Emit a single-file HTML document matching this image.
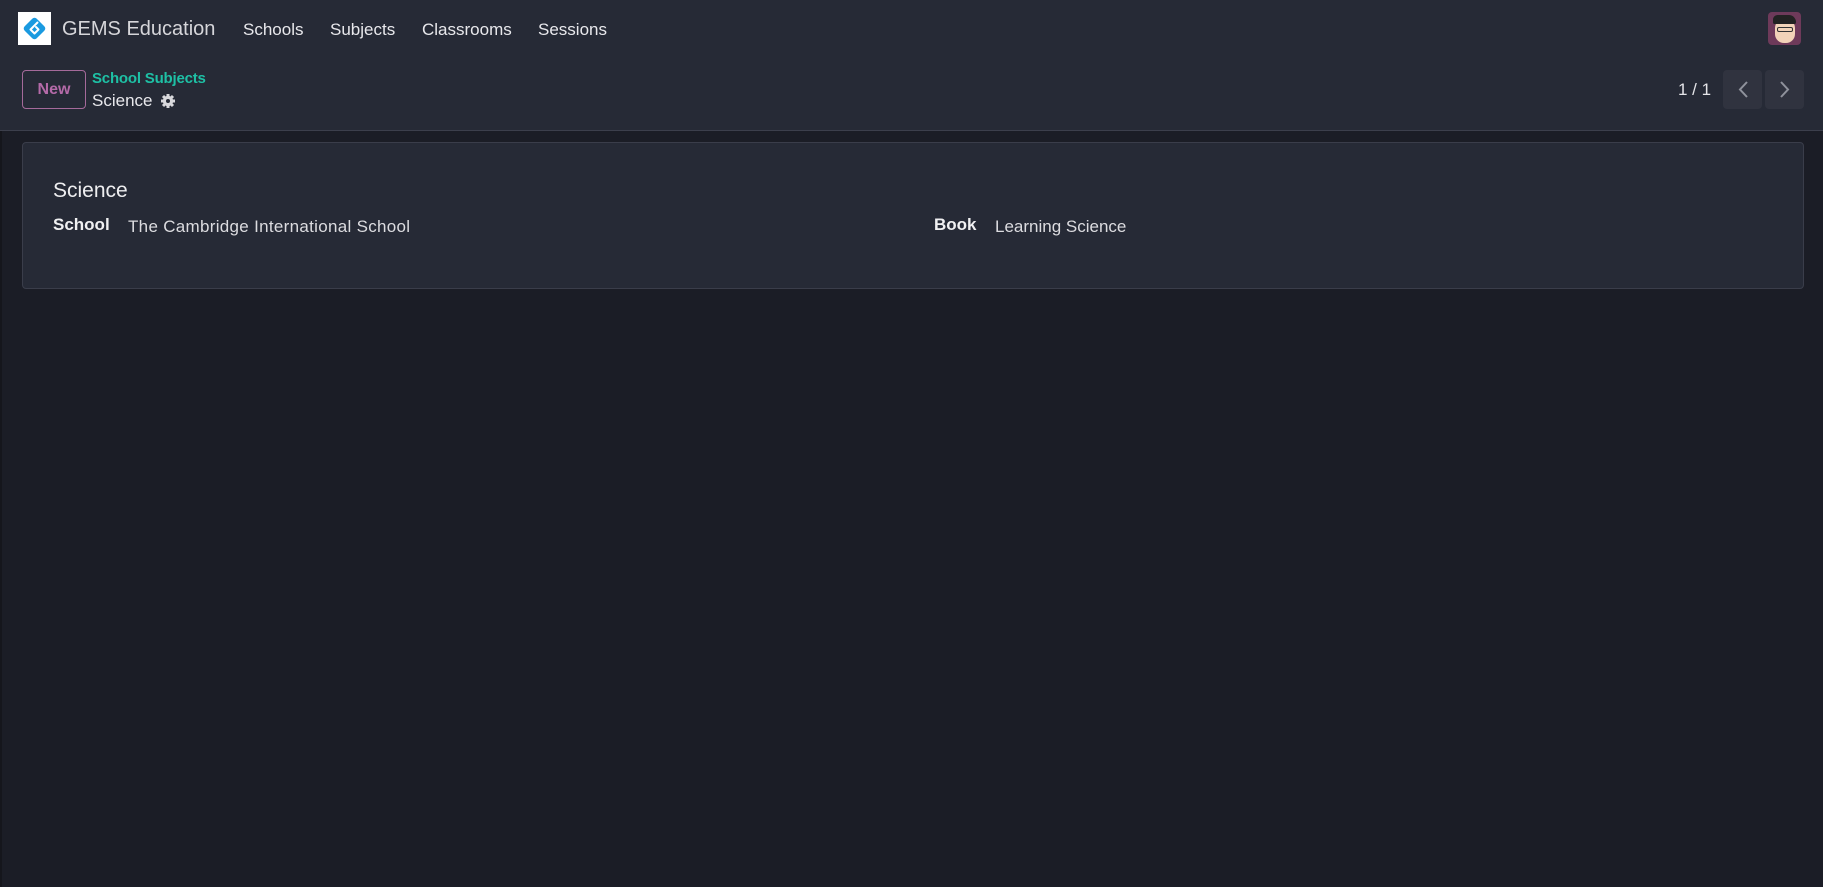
<!DOCTYPE html>
<html><head><meta charset="utf-8"><style>
*{box-sizing:border-box;margin:0;padding:0}
body{width:1823px;height:887px;background:#1b1d26;font-family:"Liberation Sans",sans-serif;color:#e4e4e7;position:relative;overflow:hidden}
.nav{position:absolute;left:0;top:0;width:1823px;height:58px;background:#262a36}
.cp{position:absolute;left:0;top:58px;width:1823px;height:73px;background:#262a36;border-bottom:1px solid #3c3f4c}
.t{position:absolute;white-space:nowrap}
.menu{font-size:17px;color:#e8e8ec;top:20px}
.card{position:absolute;left:22px;top:142px;width:1782px;height:147px;background:#262a36;border:1px solid #3a3d4a;border-radius:4px}
.pbtn{position:absolute;top:70px;width:39px;height:39px;background:#30333f;border-radius:4px}
</style></head><body>
<div style="position:absolute;left:0;top:0;width:2px;height:887px;background:#15161c"></div>
<div class="nav">
  <div style="position:absolute;left:18px;top:12px;width:33px;height:33px;background:#fff"></div>
  <svg style="position:absolute;left:18px;top:12px" width="33" height="33" viewBox="0 0 33 33">
    <rect x="8" y="8" width="17" height="17" rx="3" transform="rotate(45 16.5 16.5)" fill="#1a9ae0"/>
    <path d="M19.5 10.5 L12.5 17.5 L16.5 21.5 L20.5 17.5 L18 15" stroke="#fff" stroke-width="2" fill="none" stroke-linejoin="round" stroke-linecap="round"/>
  </svg>
  <div class="t" style="left:62px;top:18px;font-size:20px;color:#d6d6da">GEMS Education</div>
  <div class="t menu" style="left:243px">Schools</div>
  <div class="t menu" style="left:330px">Subjects</div>
  <div class="t menu" style="left:422px">Classrooms</div>
  <div class="t menu" style="left:538px">Sessions</div>
  <div style="position:absolute;left:1768px;top:12px;width:33px;height:33px;border-radius:4px;background:#6e3a5a;overflow:hidden">
    <div style="position:absolute;left:7px;top:7px;width:20px;height:24px;border-radius:9px;background:#f2d3b8"></div>
    <div style="position:absolute;left:5px;top:3px;width:23px;height:9px;border-radius:5px 8px 2px 2px;background:#222"></div>
    <div style="position:absolute;left:9px;top:15px;width:16px;height:5px;border:1.5px solid #333;border-radius:2px"></div>
  </div>
</div>
<div class="cp"></div>
<div style="position:absolute;left:22px;top:70px;width:64px;height:39px;border:1px solid #a56a9a;border-radius:4px;color:#b46aa8;font-size:16px;font-weight:bold;text-align:center;line-height:37px">New</div>
<div class="t" style="left:92px;top:70px;font-size:15px;font-weight:bold;color:#1ec0a5;letter-spacing:-0.2px">School Subjects</div>
<div class="t" style="left:92px;top:91px;font-size:17px;color:#e8e8ec">Science</div>
<svg style="position:absolute;left:160px;top:93px" width="16" height="16" viewBox="0 0 16 16"><g fill="#d8d8dc"><circle cx="8" cy="8" r="5.2"/><g stroke="#d8d8dc" stroke-width="3"><path d="M8 1v14M1 8h14M3 3l10 10M13 3L3 13"/></g></g><circle cx="8" cy="8" r="2" fill="#262a36"/></svg>
<div class="t" style="left:1678px;top:80px;font-size:17px;color:#e4e4e8">1 / 1</div>
<div class="pbtn" style="left:1723px"></div>
<div class="pbtn" style="left:1765px"></div>
<svg style="position:absolute;left:1723px;top:70px" width="81" height="39"><path d="M24 12 L17 19.5 L24 27" stroke="#8f929c" stroke-width="2" fill="none"/><path d="M58 12 L65 19.5 L58 27" stroke="#8f929c" stroke-width="2" fill="none"/></svg>
<div class="card"></div>
<div class="t" style="left:53px;top:179px;font-size:21px;color:#eeeef0">Science</div>
<div class="t" style="left:53px;top:215px;font-size:17px;font-weight:bold;color:#f0f0f2">School</div>
<div class="t" style="left:128px;top:217px;font-size:17px;color:#dcdce0;letter-spacing:0.3px">The Cambridge International School</div>
<div class="t" style="left:934px;top:215px;font-size:17px;font-weight:bold;color:#f0f0f2">Book</div>
<div class="t" style="left:995px;top:217px;font-size:17px;color:#dcdce0">Learning Science</div>
</body></html>
